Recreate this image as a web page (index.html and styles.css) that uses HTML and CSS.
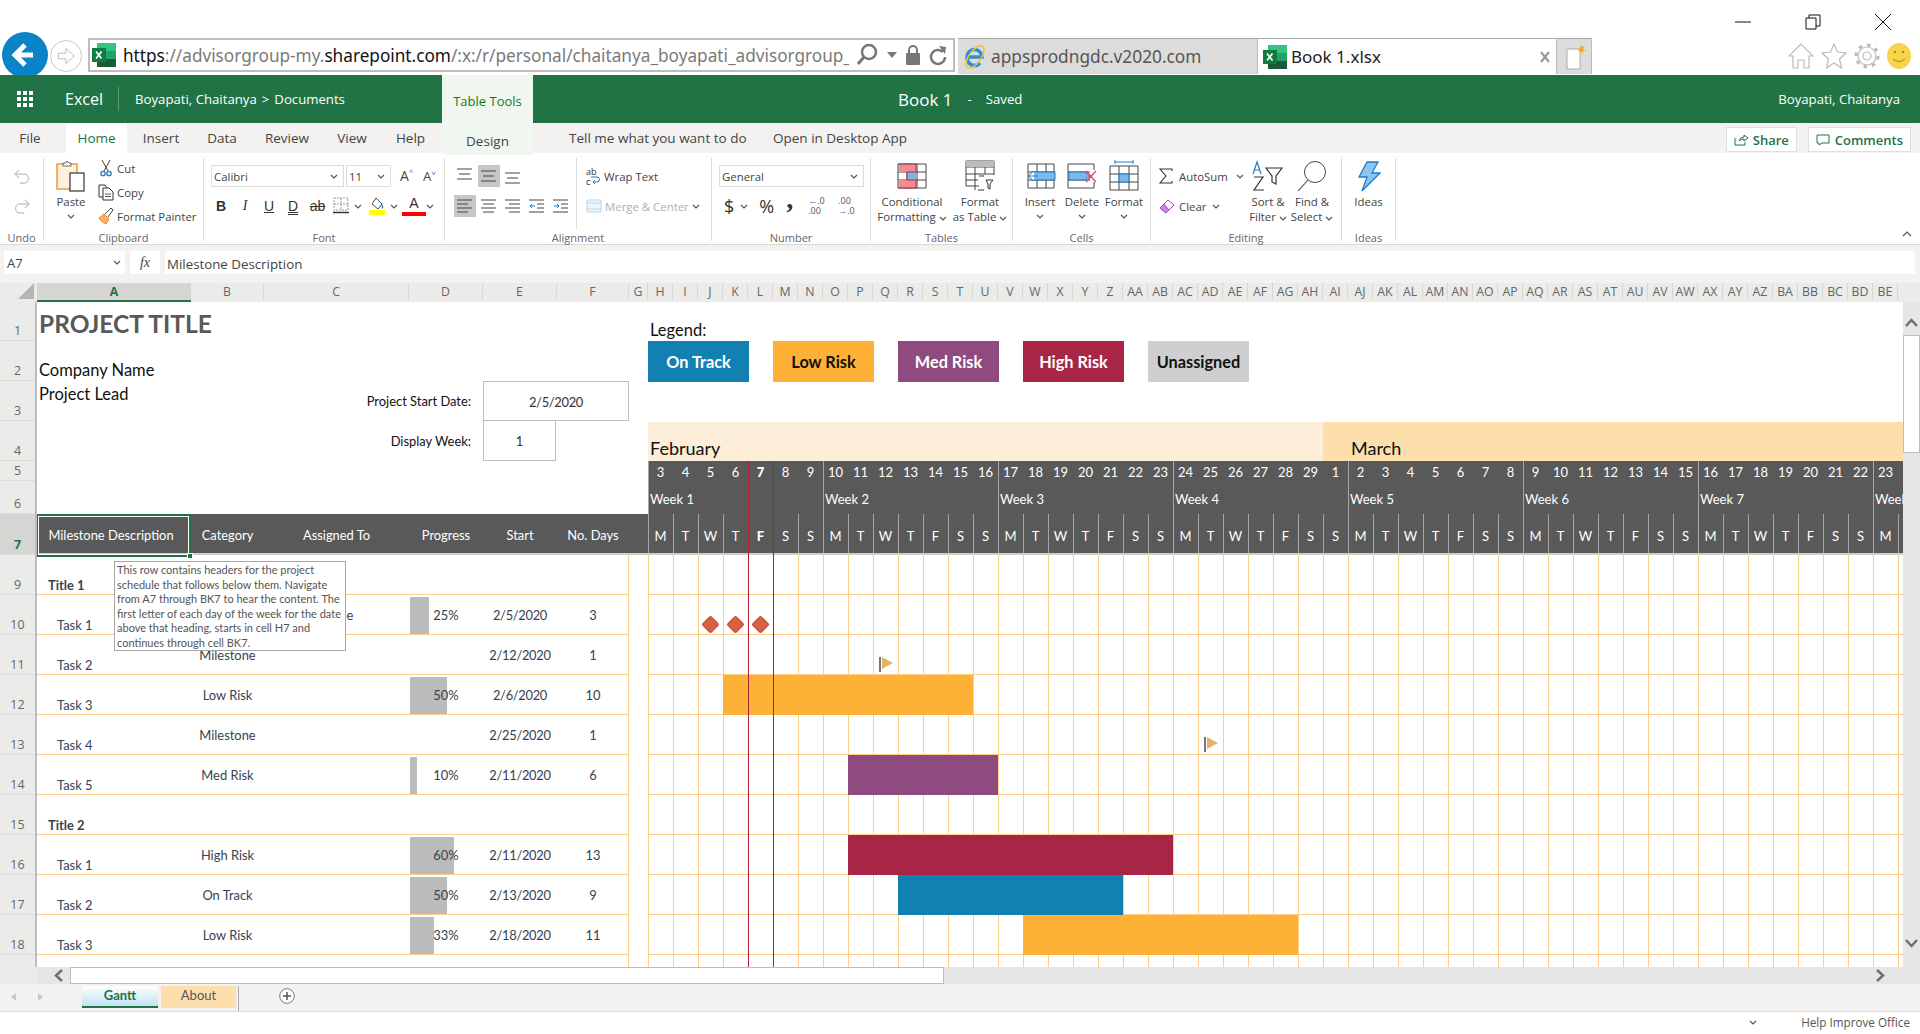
FILE: index.html
```html
<!DOCTYPE html>
<html lang="en">
<head>
    <meta charset="UTF-8">
    <title>Book 1.xlsx</title>
    <link rel="stylesheet" href="styles.css">
</head>
<body>
    <svg class="defs" width="0" height="0">
        <symbol id="xl" viewBox="0 0 24 24">
            <rect x="5" y="0" width="19" height="8" fill="#33c481"/>
            <rect x="5" y="8" width="19" height="8" fill="#21a366"/>
            <rect x="5" y="16" width="19" height="8" fill="#185c37"/>
            <rect x="0" y="5" width="14" height="14" fill="#107c41"/>
            <path d="M4 8.500l5.500 7M9.500 8.500l-5.500 7" stroke="#fff" stroke-width="1.700" fill="none"/>
        </symbol>
        <symbol id="chev" viewBox="0 0 8 5">
            <path d="M1 1l3 3 3-3" stroke="#555" stroke-width="1.200" fill="none"/>
        </symbol>
    </svg>

    <div class="window-bar">
        <svg class="win-icon" viewBox="0 0 16 16"><path d="M0 8h16" stroke="#111" stroke-width="1"/></svg>
        <svg class="win-icon" viewBox="0 0 16 16"><path d="M1 4h10v11H1zM4 4V1h11v11h-4" stroke="#111" fill="none"/></svg>
        <svg class="win-icon" viewBox="0 0 16 16"><path d="M0 0l16 16M16 0L0 16" stroke="#111"/></svg>
    </div>

    <div class="nav-bar">
        <div class="back-btn">
            <svg viewBox="0 0 46 46" width="46" height="46"><path d="M31 23H15M23 13L13 23l10 10" stroke="#fff" stroke-width="5" fill="none"/></svg>
        </div>
        <div class="forward-btn">
            <svg viewBox="0 0 32 32" width="30" height="30"><path d="M8 13h8V8l9 8-9 8v-5H8z" stroke="#bbb" fill="#fff"/></svg>
        </div>
        <div class="address">
            <svg class="fav" width="24" height="24"><use href="#xl"/></svg>
            <div class="url"><b>https</b>://advisorgroup-my.<b>sharepoint.com</b>/:x:/r/personal/chaitanya_boyapati_advisorgroup_com/Documents</div>
            <div class="addr-tools">
                <svg width="24" height="24" viewBox="0 0 24 24"><circle cx="14" cy="9" r="7" stroke="#777" stroke-width="2.500" fill="none"/><path d="M9 14l-6 7" stroke="#777" stroke-width="3"/></svg>
                <svg width="10" height="6" viewBox="0 0 10 6"><path d="M0 0h10L5 6z" fill="#777"/></svg>
                <svg width="16" height="22" viewBox="0 0 16 22"><path d="M4 10V6a4 4 0 018 0v4" stroke="#777" stroke-width="2" fill="none"/><rect x="1" y="9" width="14" height="12" rx="1" fill="#777"/></svg>
                <svg width="18" height="22" viewBox="0 0 18 22"><path d="M14 8a7 7 0 10 2 5" stroke="#777" stroke-width="2.500" fill="none"/><path d="M10 2l7 1-1 7z" fill="#777"/></svg>
            </div>
        </div>
        <div class="browser-tab">
            <svg width="24" height="26" viewBox="0 0 24 26"><path d="M5 13h14a7.500 8 0 10-2 6" stroke="#2a8fd8" stroke-width="3.500" fill="none"/><ellipse cx="12" cy="13" rx="13" ry="6" transform="rotate(-55 12 13)" stroke="#f2c230" stroke-width="1.500" fill="none"/></svg>
            <span>appsprodngdc.v2020.com</span>
        </div>
        <div class="browser-tab current">
            <svg width="24" height="24"><use href="#xl"/></svg>
            <span>Book 1.xlsx</span>
            <svg class="tab-close" width="10" height="12" viewBox="0 0 10 12"><path d="M1 1l8 10M9 1L1 11" stroke="#999" stroke-width="2.200"/></svg>
        </div>
        <div class="new-tab">
            <svg width="22" height="26" viewBox="0 0 22 26"><path d="M2 5h13v20H2z" fill="#fff" stroke="#aaa"/><path d="M16 0l1 3 3-1-2 3 3 2-3 0-1 3-1-3-3 0 2-3z" fill="#f5a623"/></svg>
        </div>
        <div class="browser-icons">
            <svg width="26" height="28" viewBox="0 0 26 28"><path d="M13 2L1 14h4v12h5v-8h6v8h5V14h4z" fill="#fff" stroke="#bbb" stroke-width="1.200"/></svg>
            <svg width="26" height="26" viewBox="0 0 26 26"><path d="M13 1l3.500 8 8.500 1-6.500 6 2 9-7.500-5-7.500 5 2-9L1 10l8.500-1z" fill="#fff" stroke="#bbb" stroke-width="1.200"/></svg>
            <svg width="26" height="26" viewBox="0 0 26 26"><circle cx="13" cy="13" r="4" fill="none" stroke="#bbb" stroke-width="1.200"/><circle cx="13" cy="13" r="9" fill="none" stroke="#bbb" stroke-width="1.200"/><circle cx="13" cy="13" r="11" fill="none" stroke="#bbb" stroke-width="3" stroke-dasharray="3.500 5.100"/></svg>
            <svg width="24" height="26" viewBox="0 0 24 26"><ellipse cx="12" cy="13" rx="12" ry="13" fill="#f7d44c"/><circle cx="8" cy="9" r="1.200" fill="#b08a10"/><circle cx="16" cy="9" r="1.200" fill="#b08a10"/><path d="M6 16q6 5 12 0" stroke="#b08a10" fill="none"/></svg>
        </div>
    </div>
    <div class="nav-gap"></div>

    <div class="suite-bar">
        <svg class="waffle" width="16" height="16" viewBox="0 0 16 16"><path d="M0 0h4v4H0zM6 0h4v4H6zM12 0h4v4h-4zM0 6h4v4H0zM6 6h4v4H6zM12 6h4v4h-4zM0 12h4v4H0zM6 12h4v4H6zM12 12h4v4h-4z" fill="#fff"/></svg>
        <span class="app-name">Excel</span>
        <span class="crumbs">Boyapati, Chaitanya<i>&gt;</i>Documents</span>
        <span class="table-tools">Table Tools</span>
        <span class="doc-name">Book 1</span>
        <span class="doc-state">-<em>Saved</em></span>
        <span class="user-name">Boyapati, Chaitanya</span>
    </div>

    <div class="tabs">
        <span class="tab tab-file">File</span>
        <span class="tab active">Home</span>
        <span class="tab">Insert</span>
        <span class="tab">Data</span>
        <span class="tab">Review</span>
        <span class="tab">View</span>
        <span class="tab">Help</span>
        <span class="tab tab-design">Design</span>
        <span class="tab-spacer"></span>
        <span class="tab-extra">Tell me what you want to do</span>
        <span class="tab-extra">Open in Desktop App</span>
        <span class="tab-actions">
            <span class="pill"><svg width="14" height="12" viewBox="0 0 14 12"><path d="M1 4v7h10V8M5 7q1-4 5-4V1l4 3-4 3V5q-3 0-5 2z" stroke="#217346" fill="none"/></svg>Share</span>
            <span class="pill"><svg width="14" height="12" viewBox="0 0 14 12"><path d="M1 1h12v8H6l-3 2V9H1z" stroke="#217346" fill="none"/></svg>Comments</span>
        </span>
    </div>

    <div class="ribbon">
        <div class="group">
            <div class="group-body undo-body">
                <svg width="18" height="18" viewBox="0 0 18 18"><path d="M6 3L2 7l4 4M2 7h9a4 4 0 010 9H7" stroke="#c8c8c8" stroke-width="1.300" fill="none"/></svg>
                <svg width="18" height="18" viewBox="0 0 18 18"><path d="M12 3l4 4-4 4M16 7H7a4 4 0 000 9h4" stroke="#c8c8c8" stroke-width="1.300" fill="none"/></svg>
            </div>
            <div class="group-label">Undo</div>
        </div>

        <div class="group">
            <div class="group-body clipboard-body">
                <div class="big">
                    <svg width="30" height="32" viewBox="0 0 30 32"><rect x="1" y="4" width="20" height="25" fill="#fdf1dd" stroke="#ed9b3a" stroke-width="1.500"/><path d="M7 6V3h3l1-2 2 2h2v3z" fill="#fff" stroke="#666"/><rect x="14" y="13" width="14" height="18" fill="#fff" stroke="#333" stroke-width="1.200"/></svg>
                    <span>Paste</span>
                    <svg class="chev" width="8" height="5"><use href="#chev"/></svg>
                </div>
                <div class="small-col">
                    <div class="small">
                        <svg width="16" height="18" viewBox="0 0 16 18"><path d="M4 1l6 11M12 1L6 12" stroke="#444" fill="none"/><circle cx="5" cy="14.500" r="2.200" stroke="#1e7cc8" stroke-width="1.300" fill="none"/><circle cx="11" cy="14.500" r="2.200" stroke="#1e7cc8" stroke-width="1.300" fill="none"/></svg>
                        <span>Cut</span>
                    </div>
                    <div class="small">
                        <svg width="16" height="18" viewBox="0 0 16 18"><path d="M5 2H1v12h4M5 2h2l2 3" stroke="#333" fill="none"/><path d="M5 5h6l4 4v8H5z" fill="#fff" stroke="#333"/><path d="M7 11h6M7 13.500h6" stroke="#555"/></svg>
                        <span>Copy</span>
                    </div>
                    <div class="small">
                        <svg width="16" height="18" viewBox="0 0 16 18"><path d="M1 11l5-4 5 5-3 5q-4-1-7-6z" fill="#f7b267" stroke="#ed8f2f"/><path d="M7 7l6-6 2 2-5 7" fill="#fff" stroke="#444"/></svg>
                        <span>Format Painter</span>
                    </div>
                </div>
            </div>
            <div class="group-label">Clipboard</div>
        </div>

        <div class="group">
            <div class="group-body font-body">
                <div class="row-top">
                    <div class="select font-name">Calibri<svg class="chev" width="8" height="5"><use href="#chev"/></svg></div>
                    <div class="select font-size">11<svg class="chev" width="8" height="5"><use href="#chev"/></svg></div>
                    <span class="grow">A<sup>^</sup></span>
                    <span class="shrink">A<sup>˅</sup></span>
                </div>
                <div class="row-low font-tools">
                    <span class="fmt fmt-b">B</span>
                    <span class="fmt fmt-i">I</span>
                    <span class="fmt fmt-u">U</span>
                    <span class="fmt fmt-d">D</span>
                    <span class="fmt fmt-s">ab</span>
                    <span class="fmt fmt-border"><svg width="16" height="18" viewBox="0 0 16 18"><path d="M1 1h14v12H1zM8 1v12M1 7h14" stroke="#999" stroke-dasharray="2 1" fill="none"/><path d="M0 15.500h16" stroke="#333" stroke-width="1.500"/></svg></span>
                    <span class="fmt-chev"><svg class="chev" width="8" height="5"><use href="#chev"/></svg></span>
                    <span class="fmt fmt-fill"><svg width="16" height="18" viewBox="0 0 16 18"><path d="M7 1l6 6-4 5-6-5z" fill="#fff" stroke="#444"/><path d="M13 7q2 3 1 5-2-1-1-5z" fill="#1e7cc8"/><rect y="13" width="16" height="5" fill="#ffff00"/></svg></span>
                    <span class="fmt-chev"><svg class="chev" width="8" height="5"><use href="#chev"/></svg></span>
                    <span class="fmt fmt-color">A</span>
                    <span class="fmt-chev"><svg class="chev" width="8" height="5"><use href="#chev"/></svg></span>
                </div>
            </div>
            <div class="group-label">Font</div>
        </div>

        <div class="group">
            <div class="group-body align-body">
                <div class="align-left">
                    <div class="row-top">
                        <span class="al"><svg width="15" height="16" viewBox="0 0 15 16"><path d="M0 1h15M2 6h11M0 11h15" stroke="#444"/></svg></span>
                        <span class="al on"><svg width="15" height="16" viewBox="0 0 15 16"><path d="M0 3h15M2 8h11M0 13h15" stroke="#444"/></svg></span>
                        <span class="al"><svg width="15" height="16" viewBox="0 0 15 16"><path d="M0 5h15M2 10h11M0 15h15" stroke="#444"/></svg></span>
                    </div>
                    <div class="row-low">
                        <span class="al on"><svg width="15" height="14" viewBox="0 0 15 14"><path d="M0 1h15M0 5h11M0 9h15M0 13h11" stroke="#444"/></svg></span>
                        <span class="al"><svg width="15" height="14" viewBox="0 0 15 14"><path d="M0 1h15M2 5h11M0 9h15M2 13h11" stroke="#444"/></svg></span>
                        <span class="al"><svg width="15" height="14" viewBox="0 0 15 14"><path d="M0 1h15M4 5h11M0 9h15M4 13h11" stroke="#444"/></svg></span>
                        <span class="al"><svg width="15" height="14" viewBox="0 0 15 14"><path d="M0 1h15M8 5h7M8 9h7M0 13h15" stroke="#444"/><path d="M6 7H1m2-2L1 7l2 2" stroke="#1e7cc8" fill="none"/></svg></span>
                        <span class="al"><svg width="15" height="14" viewBox="0 0 15 14"><path d="M0 1h15M8 5h7M8 9h7M0 13h15" stroke="#444"/><path d="M1 7h5M4 5l2 2-2 2" stroke="#1e7cc8" fill="none"/></svg></span>
                    </div>
                </div>
                <div class="align-right">
                    <div class="small wrap-row">
                        <span class="wrap-icon">ab<br>c<svg width="10" height="9" viewBox="0 0 10 9"><path d="M1 1h6a2.500 2.500 0 010 5H3m2-2L3 6l2 2" stroke="#1e7cc8" fill="none"/></svg></span>
                        <span>Wrap Text</span>
                    </div>
                    <div class="small merge-row">
                        <svg width="16" height="14" viewBox="0 0 16 14"><path d="M1 1h14v12H1zM1 4h14M1 10h14" stroke="#bcd5e8" fill="#eef5fa"/></svg>
                        <span>Merge &amp; Center</span>
                        <svg class="chev" width="8" height="5"><use href="#chev"/></svg>
                    </div>
                </div>
            </div>
            <div class="group-label">Alignment</div>
        </div>

        <div class="group">
            <div class="group-body number-body">
                <div class="row-top">
                    <div class="select num-format">General<svg class="chev" width="8" height="5"><use href="#chev"/></svg></div>
                </div>
                <div class="row-low num-tools">
                    <span class="num-sym">$</span>
                    <svg class="chev" width="8" height="5"><use href="#chev"/></svg>
                    <span class="num-sym num-pct">%</span>
                    <span class="num-sym num-comma">,</span>
                    <span class="num-dec"><i>←</i>.0<br>.00</span>
                    <span class="num-dec">.00<br><i>→</i>.0</span>
                </div>
            </div>
            <div class="group-label">Number</div>
        </div>

        <div class="group">
            <div class="group-body tables-body">
                <div class="big">
                    <svg width="30" height="32" viewBox="0 0 30 32"><path d="M1 4h28v24H1zM1 12h28M1 20h28M10 4v24M20 4v24" stroke="#444" fill="#fff"/><rect x="2" y="5" width="17" height="7" fill="#f28b92"/><rect x="10" y="12" width="9" height="8" fill="#7db6e8"/><rect x="2" y="20" width="17" height="7" fill="#f28b92"/><path d="M1 4h18v8h-9v8h9v8H1" stroke="#b3303c" fill="none"/></svg>
                    <span>Conditional</span>
                    <span>Formatting <svg class="chev" width="8" height="5"><use href="#chev"/></svg></span>
                </div>
                <div class="big">
                    <svg width="30" height="32" viewBox="0 0 30 32"><path d="M1 1h28v25H1zM1 7h28M1 14h28M1 20h12M10 1v29M20 1v13" stroke="#444" fill="#fff"/><rect x="1" y="1" width="28" height="6" fill="#bbb"/><rect x="14" y="15" width="16" height="16" fill="#fff"/><path d="M21 20h7l-3 4v5l-2-1v-4z" fill="#fff" stroke="#333"/><path d="M13 30h6M19 16h-5" stroke="#333"/></svg>
                    <span>Format</span>
                    <span>as Table <svg class="chev" width="8" height="5"><use href="#chev"/></svg></span>
                </div>
            </div>
            <div class="group-label">Tables</div>
        </div>

        <div class="group">
            <div class="group-body cells-body">
                <div class="big">
                    <svg width="32" height="32" viewBox="0 0 32 32"><path d="M4 4h26v24H4zM4 12h26M4 20h26M13 4v24M22 4v24" stroke="#444" fill="#fff"/><rect x="8" y="12" width="23" height="8" fill="#7db6e8" stroke="#1e7cc8"/><path d="M10 11l-6 5 6 5M4 16h10" stroke="#1e7cc8" fill="#fff"/></svg>
                    <span>Insert</span>
                    <svg class="chev" width="8" height="5"><use href="#chev"/></svg>
                </div>
                <div class="big">
                    <svg width="32" height="32" viewBox="0 0 32 32"><path d="M2 4h26M2 12h22M2 20h22M2 28h26M2 4v24M11 12v8M28 4v6M28 22v6" stroke="#444" fill="none"/><path d="M3 12h16l5 4-5 4H3z" fill="#7db6e8" stroke="#1e7cc8"/><path d="M20 11l10 11M30 11L20 22" stroke="#e8434c" stroke-width="1.300"/></svg>
                    <span>Delete</span>
                    <svg class="chev" width="8" height="5"><use href="#chev"/></svg>
                </div>
                <div class="big">
                    <svg width="32" height="32" viewBox="0 0 32 32"><path d="M2 6h28v24H2zM2 14h28M2 22h28M11 6v24M21 6v24" stroke="#444" fill="#fff"/><rect x="11" y="14" width="10" height="8" fill="#7db6e8" stroke="#1e7cc8"/><path d="M7 2h18M7 0v4M25 0v4" stroke="#1e7cc8"/></svg>
                    <span>Format</span>
                    <svg class="chev" width="8" height="5"><use href="#chev"/></svg>
                </div>
            </div>
            <div class="group-label">Cells</div>
        </div>

        <div class="group">
            <div class="group-body editing-body">
                <div class="edit-col">
                    <div class="small autosum-row">
                        <svg width="14" height="16" viewBox="0 0 14 16"><path d="M13 3V1H1l6 7-6 7h12v-2" stroke="#333" stroke-width="1.100" fill="none"/></svg>
                        <span>AutoSum</span>
                        <svg class="chev" width="8" height="5"><use href="#chev"/></svg>
                    </div>
                    <div class="small clear-row">
                        <svg width="16" height="16" viewBox="0 0 16 16"><path d="M1 10l8-8 6 5-8 8z" fill="#fff" stroke="#a24bb8"/><path d="M1 10l4-4 5 6-3 3z" fill="#c98ad9" stroke="#a24bb8"/></svg>
                        <span>Clear</span>
                        <svg class="chev" width="8" height="5"><use href="#chev"/></svg>
                    </div>
                </div>
                <div class="big">
                    <svg width="32" height="32" viewBox="0 0 32 32"><path d="M1 14l4-12 4 12M2.500 10h5" stroke="#1e7cc8" stroke-width="1.200" fill="none"/><path d="M2 17h9L2 30h10" stroke="#333" stroke-width="1.200" fill="none"/><path d="M14 8h16l-6 8v8l-4-2v-6z" stroke="#333" stroke-width="1.200" fill="#fff"/></svg>
                    <span>Sort &amp;</span>
                    <span>Filter <svg class="chev" width="8" height="5"><use href="#chev"/></svg></span>
                </div>
                <div class="big">
                    <svg width="32" height="32" viewBox="0 0 32 32"><circle cx="19" cy="12" r="10.500" stroke="#444" fill="#fff"/><path d="M12 20L2 31" stroke="#777" stroke-width="1.200"/></svg>
                    <span>Find &amp;</span>
                    <span>Select <svg class="chev" width="8" height="5"><use href="#chev"/></svg></span>
                </div>
            </div>
            <div class="group-label">Editing</div>
        </div>

        <div class="group">
            <div class="group-body ideas-body">
                <div class="big">
                    <svg width="24" height="32" viewBox="0 0 24 32"><path d="M10 2h11l-6 11h8L5 31l5-14H2z" fill="#8cc4f2" stroke="#1e7cc8" stroke-width="1.300"/></svg>
                    <span>Ideas</span>
                </div>
            </div>
            <div class="group-label">Ideas</div>
        </div>
        <svg class="collapse" width="10" height="6" viewBox="0 0 10 6"><path d="M1 5l4-4 4 4" stroke="#555" stroke-width="1.200" fill="none"/></svg>
    </div>

    <div class="formula-bar">
        <div class="name-box">A7<svg class="chev" width="8" height="5"><use href="#chev"/></svg></div>
        <div class="fx-box">fx</div>
        <div class="formula-input">Milestone Description</div>
    </div>

    <div class="col-heads">
        <div class="corner"></div>
        <span class="col-active">A</span><span>B</span><span>C</span><span>D</span><span>E</span><span>F</span><span>G</span>
        <span>H</span><span>I</span><span>J</span><span>K</span><span>L</span><span>M</span><span>N</span><span>O</span><span>P</span><span>Q</span><span>R</span><span>S</span><span>T</span><span>U</span><span>V</span><span>W</span><span>X</span><span>Y</span><span>Z</span>
        <span>AA</span><span>AB</span><span>AC</span><span>AD</span><span>AE</span><span>AF</span><span>AG</span><span>AH</span><span>AI</span><span>AJ</span><span>AK</span><span>AL</span><span>AM</span><span>AN</span><span>AO</span><span>AP</span><span>AQ</span><span>AR</span><span>AS</span><span>AT</span><span>AU</span><span>AV</span><span>AW</span><span>AX</span><span>AY</span><span>AZ</span>
        <span>BA</span><span>BB</span><span>BC</span><span>BD</span><span>BE</span>
    </div>

    <div class="sheet">
        <div class="row-heads">
            <span class="rh-40">1</span>
            <span class="rh-40">2</span>
            <span class="rh-40">3</span>
            <span class="rh-40">4</span>
            <span class="rh-20">5</span>
            <span class="rh-33">6</span>
            <span class="rh-41 row-active">7</span>
            <span class="rh-40">9</span>
            <span class="rh-40">10</span>
            <span class="rh-40">11</span>
            <span class="rh-40">12</span>
            <span class="rh-40">13</span>
            <span class="rh-40">14</span>
            <span class="rh-40">15</span>
            <span class="rh-40">16</span>
            <span class="rh-40">17</span>
            <span class="rh-40">18</span>
        </div>

        <div class="grid">
            <div class="schedule">
                <div class="project">
                    <div class="project-title">PROJECT TITLE</div>
                    <div class="company">Company Name</div>
                    <div class="lead">Project Lead</div>
                    <div class="field-label label-date">Project Start Date:</div>
                    <div class="field-box box-date date">2/5/2020</div>
                    <div class="field-label label-week">Display Week:</div>
                    <div class="field-box box-week">1</div>
                </div>

                <div class="head-row">
                    <span class="head-selected">Milestone Description</span>
                    <span>Category</span>
                    <span>Assigned To</span>
                    <span>Progress</span>
                    <span>Start</span>
                    <span>No. Days</span>
                    <span></span>
                </div>

                <div class="task-row"><span class="title-cell">Title 1</span></div>
                <div class="task-row">
                    <span class="task-cell">Task 1</span><span></span><span>Name</span>
                    <span class="pct"><i class="pct-bar" style="width:25%"></i><em>25%</em></span><span class="date">2/5/2020</span><span>3</span>
                </div>
                <div class="task-row">
                    <span class="task-cell">Task 2</span><span>Milestone</span><span></span>
                    <span class="pct"></span><span class="date">2/12/2020</span><span>1</span>
                </div>
                <div class="task-row">
                    <span class="task-cell">Task 3</span><span>Low Risk</span><span></span>
                    <span class="pct"><i class="pct-bar" style="width:50%"></i><em>50%</em></span><span class="date">2/6/2020</span><span>10</span>
                </div>
                <div class="task-row">
                    <span class="task-cell">Task 4</span><span>Milestone</span><span></span>
                    <span class="pct"></span><span class="date">2/25/2020</span><span>1</span>
                </div>
                <div class="task-row">
                    <span class="task-cell">Task 5</span><span>Med Risk</span><span></span>
                    <span class="pct"><i class="pct-bar" style="width:10%"></i><em>10%</em></span><span class="date">2/11/2020</span><span>6</span>
                </div>
                <div class="task-row"><span class="title-cell">Title 2</span></div>
                <div class="task-row">
                    <span class="task-cell">Task 1</span><span>High Risk</span><span></span>
                    <span class="pct"><i class="pct-bar" style="width:60%"></i><em>60%</em></span><span class="date">2/11/2020</span><span>13</span>
                </div>
                <div class="task-row">
                    <span class="task-cell">Task 2</span><span>On Track</span><span></span>
                    <span class="pct"><i class="pct-bar" style="width:50%"></i><em>50%</em></span><span class="date">2/13/2020</span><span>9</span>
                </div>
                <div class="task-row">
                    <span class="task-cell">Task 3</span><span>Low Risk</span><span></span>
                    <span class="pct"><i class="pct-bar" style="width:33%"></i><em>33%</em></span><span class="date">2/18/2020</span><span>11</span>
                </div>
                <div class="task-row"></div>
            </div>

            <div class="timeline">
                <div class="legend">
                    <div class="legend-label">Legend:</div>
                    <div class="legend-items">
                        <span class="on-track">On Track</span>
                        <span class="low-risk">Low Risk</span>
                        <span class="med-risk">Med Risk</span>
                        <span class="high-risk">High Risk</span>
                        <span class="unassigned">Unassigned</span>
                    </div>
                </div>

                <div class="months">
                    <span class="feb">February</span>
                    <span class="mar">March</span>
                </div>

                <div class="tl-head">
                    <div class="days">
                        <span>3</span><span>4</span><span>5</span><span>6</span><span class="today">7</span><span>8</span><span>9</span><span>10</span><span>11</span><span>12</span><span>13</span><span>14</span><span>15</span><span>16</span><span>17</span><span>18</span><span>19</span><span>20</span><span>21</span><span>22</span><span>23</span><span>24</span><span>25</span><span>26</span><span>27</span><span>28</span><span>29</span>
                        <span>1</span><span>2</span><span>3</span><span>4</span><span>5</span><span>6</span><span>7</span><span>8</span><span>9</span><span>10</span><span>11</span><span>12</span><span>13</span><span>14</span><span>15</span><span>16</span><span>17</span><span>18</span><span>19</span><span>20</span><span>21</span><span>22</span><span>23</span>
                    </div>
                    <div class="weeks">
                        <span>Week 1</span><span>Week 2</span><span>Week 3</span><span>Week 4</span><span>Week 5</span><span>Week 6</span><span>Week 7</span><span>Week 8</span>
                    </div>
                    <div class="dows">
                        <span>M</span><span>T</span><span>W</span><span>T</span><span class="today">F</span><span>S</span><span>S</span>
                        <span>M</span><span>T</span><span>W</span><span>T</span><span>F</span><span>S</span><span>S</span>
                        <span>M</span><span>T</span><span>W</span><span>T</span><span>F</span><span>S</span><span>S</span>
                        <span>M</span><span>T</span><span>W</span><span>T</span><span>F</span><span>S</span><span>S</span>
                        <span>M</span><span>T</span><span>W</span><span>T</span><span>F</span><span>S</span><span>S</span>
                        <span>M</span><span>T</span><span>W</span><span>T</span><span>F</span><span>S</span><span>S</span>
                        <span>M</span><span>T</span><span>W</span><span>T</span><span>F</span><span>S</span><span>S</span>
                        <span>M</span>
                    </div>
                </div>

                <div class="gantt">
                    <div class="gantt-row"></div>
                    <div class="gantt-row">
                        <i class="diamond" style="grid-column:3"></i><i class="diamond" style="grid-column:4"></i><i class="diamond" style="grid-column:5"></i>
                    </div>
                    <div class="gantt-row"><i class="flag" style="grid-column:10"></i></div>
                    <div class="gantt-row"><i class="bar low-risk" style="grid-column:4 / span 10"></i></div>
                    <div class="gantt-row"><i class="flag" style="grid-column:23"></i></div>
                    <div class="gantt-row"><i class="bar med-risk" style="grid-column:9 / span 6"></i></div>
                    <div class="gantt-row"></div>
                    <div class="gantt-row"><i class="bar high-risk" style="grid-column:9 / span 13"></i></div>
                    <div class="gantt-row"><i class="bar on-track" style="grid-column:11 / span 9"></i></div>
                    <div class="gantt-row"><i class="bar low-risk" style="grid-column:16 / span 11"></i></div>
                    <div class="gantt-row"></div>
                </div>

                <i class="today-line today-line-a"></i>
                <i class="today-line today-line-b"></i>
            </div>

            <div class="cell-cursor"><i></i></div>
            <div class="cell-tip">This row contains headers for the project<br>schedule that follows below them. Navigate<br>from A7 through BK7 to hear the content. The<br>first letter of each day of the week for the date<br>above that heading, starts in cell H7 and<br>continues through cell BK7.</div>
        </div>

        <div class="vscroll">
            <svg class="arrow-up" width="13" height="9" viewBox="0 0 13 9"><path d="M1 8l5.500-6 5.500 6" stroke="#707070" stroke-width="2.500" fill="none"/></svg>
            <div class="vthumb"></div>
            <svg class="arrow-down" width="13" height="9" viewBox="0 0 13 9"><path d="M1 1l5.500 6 5.500-6" stroke="#707070" stroke-width="2.500" fill="none"/></svg>
        </div>
    </div>

    <div class="hscroll">
        <div class="hs-corner"></div>
        <div class="hs-left"><svg width="9" height="13" viewBox="0 0 9 13"><path d="M8 1L2 6.500 8 12" stroke="#707070" stroke-width="2.500" fill="none"/></svg></div>
        <div class="hthumb"></div>
        <div class="hs-right"><svg width="9" height="13" viewBox="0 0 9 13"><path d="M1 1l6 5.500L1 12" stroke="#707070" stroke-width="2.500" fill="none"/></svg></div>
    </div>

    <div class="sheet-tabs">
        <div class="tab-nav">
            <svg width="5" height="8" viewBox="0 0 5 8"><path d="M5 0v8L0 4z" fill="#c8c8c8"/></svg>
            <svg width="5" height="8" viewBox="0 0 5 8"><path d="M0 0v8l5-4z" fill="#c8c8c8"/></svg>
        </div>
        <span class="sheet-tab tab-gantt">Gantt</span>
        <span class="sheet-tab tab-about">About</span>
        <span class="tab-sep"></span>
        <svg class="add-sheet" width="16" height="16" viewBox="0 0 16 16"><circle cx="8" cy="8" r="7.300" stroke="#777" fill="#fff"/><path d="M8 4v8M4 8h8" stroke="#555" stroke-width="1.500"/></svg>
    </div>

    <div class="status-bar">
        <svg class="chev" width="8" height="5"><use href="#chev"/></svg>
        <span>Help Improve Office</span>
    </div>
</body>
</html>
```

FILE: styles.css
```css
* {
    margin: 0;
    padding: 0;
    box-sizing: border-box;
}

body {
    font-family: "Open Sans", Arial, sans-serif;
    width: 1920px;
    height: 1034px;
    overflow: hidden;
    background: #fff;
    color: #444;
}

i, em {
    font-style: normal;
}

.defs {
    position: absolute;
}

.chev {
    flex: none;
}

/* browser frame */
.window-bar {
    height: 38px;
    display: flex;
    justify-content: flex-end;
    align-items: flex-start;
    gap: 54px;
    padding: 14px 29px 0 0;
}

.win-icon {
    width: 16px;
    height: 16px;
}

.nav-bar {
    height: 36px;
    display: flex;
}

.nav-gap {
    height: 1px;
}

.back-btn {
    width: 46px;
    height: 46px;
    margin: -6px 0 0 2px;
    border-radius: 50%;
    background: #0a84c6;
}

.forward-btn {
    width: 32px;
    height: 32px;
    margin: 2px 6px 0 2px;
    border: 1px solid #c8c8c8;
    border-radius: 50%;
}

.address {
    width: 867px;
    height: 34px;
    display: flex;
    align-items: center;
    border: 2px solid #bdbdbd;
    margin-right: 3px;
}

.fav {
    margin-left: 2px;
    flex: none;
}

.url {
    flex: 1;
    margin-left: 7px;
    font-family: "Noto Sans", sans-serif;
    font-size: 17.200px;
    color: #7a7a7a;
    white-space: nowrap;
    overflow: hidden;
}

.url b {
    font-weight: 400;
    color: #111;
}

.addr-tools {
    width: 104px;
    flex: none;
    display: flex;
    align-items: center;
    gap: 8px;
    padding-left: 6px;
}

.browser-tab {
    width: 299px;
    height: 36px;
    display: flex;
    align-items: center;
    gap: 4px;
    padding-left: 5px;
    background: #dcdcdc;
    border-top: 1px solid #aaa;
    font-family: "Noto Sans", sans-serif;
    font-size: 17.300px;
    color: #555;
}

.browser-tab.current {
    width: 300px;
    background: #fff;
    color: #222;
    font-size: 17px;
    border-left: 1px solid #bbb;
    border-right: 1px solid #bbb;
}

.tab-close {
    margin-left: auto;
    margin-right: 6px;
}

.new-tab {
    width: 35px;
    height: 36px;
    padding: 5px 0 0 8px;
    background: #dcdcdc;
    border-top: 1px solid #aaa;
    border-right: 1px solid #bbb;
}

.browser-icons {
    margin-left: auto;
    padding-right: 9px;
    display: flex;
    align-items: center;
    gap: 7px;
}

/* excel suite header */
.suite-bar {
    position: relative;
    height: 48px;
    display: flex;
    align-items: center;
    background: #217346;
    color: #fff;
}

.waffle {
    margin-left: 17px;
}

.app-name {
    width: 54px;
    margin-left: 32px;
    height: 24px;
    line-height: 24px;
    font-size: 16px;
    border-right: 1px solid #5d9a78;
}

.crumbs {
    width: 323px;
    padding-left: 16px;
    font-size: 13.200px;
}

.crumbs i {
    margin: 0 5px;
}

.table-tools {
    width: 91px;
    height: 48px;
    line-height: 52px;
    text-align: center;
    background: #f0f7f1;
    color: #107c10;
    font-size: 13px;
    white-space: nowrap;
}

.doc-name {
    margin-left: 365px;
    font-size: 17px;
}

.doc-state {
    margin-left: 15px;
    font-size: 13.200px;
}

.doc-state em {
    margin-left: 14px;
}

.user-name {
    margin-left: auto;
    padding-right: 20px;
    font-size: 13.200px;
}

/* ribbon tabs */
.tabs {
    height: 30px;
    display: grid;
    grid-template-columns: 66px 61px 68px 54px 76px 54px 63px 91px 36px 204px 170px 1fr;
    background: #f3f2f1;
    font-size: 13.500px;
    color: #444;
}

.tab {
    text-align: center;
    line-height: 30px;
}

.tab-file {
    padding-right: 6px;
}

.tab.active {
    background: #fff;
    color: #217346;
}

.tab-design {
    background: #f0f7f1;
    height: 32px;
    line-height: 36px;
    position: relative;
}

.tab-extra {
    line-height: 30px;
    white-space: nowrap;
}

.tab-actions {
    display: flex;
    justify-content: flex-end;
    gap: 11px;
    padding: 4px 9px 3px 0;
}

.pill {
    display: flex;
    align-items: center;
    gap: 5px;
    padding: 0 7px;
    background: #fff;
    border: 1px solid #e1dfdd;
    color: #217346;
    font-size: 13px;
    font-weight: 600;
}

/* ribbon */
.ribbon {
    height: 92px;
    display: grid;
    grid-template-columns: 44px 160px 241px 267px 159px 142px 138px 191px 54px 1fr;
    border-bottom: 1px solid #d8d8d8;
    background: #fff;
    font-size: 11.400px;
    color: #444;
}

.group {
    height: 83px;
    margin-top: 5px;
    border-right: 1px solid #dcdcdc;
    display: flex;
    flex-direction: column;
}

.group-body {
    height: 74px;
    flex: none;
}

.group-label {
    flex: none;
    text-align: center;
    font-size: 11px;
    line-height: 12px;
    color: #666;
    white-space: nowrap;
}

.collapse {
    justify-self: end;
    align-self: end;
    margin: 0 8px 7px 0;
}

.big {
    display: flex;
    flex-direction: column;
    align-items: center;
    white-space: nowrap;
    line-height: 15px;
}

.big > svg:first-child {
    margin: 2px 0;
    height: 32px;
    flex: none;
}

.big > .chev {
    margin-top: 5px;
}

.small {
    display: flex;
    align-items: center;
    gap: 3px;
    height: 24px;
    white-space: nowrap;
}

.undo-body {
    display: flex;
    flex-direction: column;
    align-items: center;
    gap: 12px;
    padding-top: 9px;
}

.clipboard-body {
    display: grid;
    grid-template-columns: 54px 1fr;
}

.small-col {
    margin-top: -2px;
}

.row-top {
    display: flex;
    align-items: center;
    height: 22px;
    margin-top: 7px;
}

.row-low {
    display: flex;
    align-items: center;
    height: 22px;
    margin-top: 8px;
}

.select {
    height: 22px;
    display: flex;
    align-items: center;
    justify-content: space-between;
    padding: 0 5px 0 2px;
    border: 1px solid #dcdcdc;
    white-space: nowrap;
}

.font-body {
    padding-left: 7px;
}

.font-name {
    width: 133px;
    margin-right: 2px;
}

.font-size {
    width: 45px;
}

.grow, .shrink {
    font-size: 14px;
    margin-left: 9px;
    width: 14px;
    line-height: 20px;
}

.shrink {
    margin-left: 9px;
    font-size: 13px;
}

.grow sup, .shrink sup {
    font-size: 8px;
    color: #1e7cc8;
    line-height: 0;
}

.font-tools {
    margin-left: -2px;
}

.fmt {
    width: 24px;
    text-align: center;
    font-family: "Liberation Sans", sans-serif;
    font-size: 14px;
    color: #333;
    display: flex;
    justify-content: center;
    align-items: center;
}

.fmt-b {
    font-weight: 700;
}

.fmt-i {
    font-style: italic;
    font-family: "Liberation Serif", serif;
}

.fmt-u {
    text-decoration: underline;
}

.fmt-d {
    text-decoration: underline double;
}

.fmt-s {
    text-decoration: line-through;
    width: 25px;
}

.fmt-border {
    width: 22px;
}

.fmt-chev {
    width: 8px;
    display: flex;
    align-items: center;
}

.fmt-border + .fmt-chev {
    width: 12px;
    padding-left: 2px;
}

.fmt-fill {
    width: 26px;
}

.fmt-color {
    margin-left: 4px;
    height: 20px;
    font-size: 14px;
    line-height: 14px;
    align-items: flex-start;
    box-shadow: inset 0 -4px 0 #ff0000, inset 4px 0 0 #fff, inset -4px 0 0 #fff;
}

.align-body {
    padding-left: 7px;
    display: flex;
}

.align-left {
    width: 125px;
    height: 71px;
    border-right: 1px solid #dcdcdc;
}

.al {
    width: 24px;
    height: 22px;
    display: flex;
    align-items: center;
    justify-content: center;
    flex: none;
}

.al:last-child {
    width: 25px;
}

.al.on {
    background: #c8c6c4;
    box-shadow: 2px 0 0 #fff inset;
}

.align-right {
    padding-left: 9px;
    padding-top: 6px;
}

.wrap-row {
    height: 24px;
    gap: 2px;
}

.wrap-icon {
    width: 16px;
    font-size: 9px;
    line-height: 9px;
    color: #333;
}

.merge-row {
    height: 24px;
    margin-top: 6px;
    gap: 3px;
    color: #b0b0b0;
}

.number-body {
    padding-left: 7px;
}

.num-format {
    width: 145px;
}

.num-tools {
    padding-left: 5px;
    gap: 6px;
}

.num-sym {
    font-size: 18px;
    color: #333;
}

.num-pct {
    margin-left: 5px;
}

.num-comma {
    margin: -14px 9px 0 6px;
    font-family: "Liberation Serif", serif;
    font-size: 28px;
    line-height: 22px;
    font-weight: 700;
}

.num-dec {
    font-size: 9px;
    line-height: 10px;
    width: 20px;
    color: #555;
    white-space: nowrap;
    margin-right: 4px;
}

.num-dec i {
    color: #1e7cc8;
}

.tables-body {
    padding-left: 7px;
    display: grid;
    grid-template-columns: 68px 68px;
}

.cells-body {
    padding-left: 6px;
    display: grid;
    grid-template-columns: 42px 42px 42px;
}

.editing-body {
    padding-left: 8px;
    display: grid;
    grid-template-columns: 87px 44px 44px;
}

.edit-col {
    padding-top: 6px;
}

.autosum-row {
    gap: 6px;
}

.clear-row {
    margin-top: 6px;
    gap: 4px;
}

.edit-col .chev {
    margin-left: 2px;
}

.ideas-body {
    display: flex;
    justify-content: center;
}

/* formula bar */
.formula-bar {
    height: 38px;
    display: flex;
    gap: 5px;
    padding: 6px 5px 9px 4px;
    background: #f3f2f1;
}

.name-box {
    width: 121px;
    display: flex;
    align-items: center;
    justify-content: space-between;
    padding: 0 4px 0 3px;
    background: #fff;
    font-size: 13px;
    color: #444;
}

.fx-box {
    width: 30px;
    background: #fff;
    text-align: center;
    font-family: "Liberation Serif", serif;
    font-style: italic;
    font-size: 14px;
    line-height: 23px;
}

.formula-input {
    flex: 1;
    background: #fff;
    padding-left: 2px;
    font-size: 13.300px;
    line-height: 27px;
    color: #444;
}

/* column and row headers */
.col-heads {
    height: 19px;
    display: grid;
    grid-template-columns: 37px 154px 73px 145px 74px 74px 72px 19px repeat(50, 25px) 1fr;
    background: #ebebea;
    font-size: 12.300px;
    line-height: 17px;
    color: #666;
}

.col-heads span {
    text-align: center;
    border-right: 1px solid #d8d7d5;
    height: 17px;
    overflow: hidden;
}

.corner {
    width: 0;
    height: 0;
    margin-left: 18px;
    border-style: solid;
    border-width: 0 0 16px 16px;
    border-color: transparent transparent #b5b5b5 transparent;
}

.col-heads .col-active {
    height: 19px;
    background: #d6d5d3;
    border-bottom: 2px solid #217346;
    border-right: 0;
    color: #217346;
    font-weight: 700;
}

.sheet {
    height: 665px;
    display: flex;
}

.row-heads {
    width: 37px;
    flex: none;
    background: #ebebea;
    border-right: 2px solid #bdbdbd;
    font-size: 12.500px;
    color: #666;
    text-align: center;
}

.row-heads span {
    display: flex;
    align-items: flex-end;
    justify-content: center;
    line-height: 18px;
    border-bottom: 1px solid #dcdcdc;
}

.rh-40 {
    height: 40px;
}

.row-heads .rh-40:first-child {
    height: 39px;
}

.rh-20 {
    height: 20px;
}

.rh-33 {
    height: 33px;
}

.rh-41 {
    height: 41px;
}

.row-heads .row-active {
    background: #d6d5d3;
    color: #217346;
    font-weight: 700;
}

/* sheet body */
.grid {
    position: relative;
    width: 1866px;
    flex: none;
    display: flex;
    overflow: hidden;
    font-family: Lato, sans-serif;
}

.schedule {
    width: 611px;
    flex: none;
    font-size: 12.900px;
    color: #38424f;
}

.date {
    letter-spacing: -0.300px;
}

.project {
    height: 212px;
    display: grid;
    grid-template-columns: 446px 73px 73px;
    grid-template-rows: 39px 40px 40px 40px;
    color: #111;
}

.project-title {
    grid-column: 1 / -1;
    padding-left: 2px;
    font-size: 24.500px;
    font-weight: 700;
    color: #595959;
    line-height: 43px;
}

.company {
    grid-column: 1 / -1;
    grid-row: 2;
    align-self: end;
    padding: 0 0 1px 2px;
    font-size: 16.500px;
    line-height: 20px;
}

.lead {
    grid-column: 1;
    grid-row: 3;
    padding: 3px 0 0 2px;
    font-size: 16.500px;
    line-height: 20px;
}

.field-label {
    grid-column: 1;
    text-align: right;
    padding-right: 12px;
    line-height: 41px;
}

.label-date {
    grid-row: 3;
}

.label-week {
    grid-row: 4;
}

.field-box {
    border: 1px solid #bdbdbd;
    text-align: center;
    line-height: 40px;
    color: #333;
}

.box-date {
    grid-column: 2 / span 2;
    grid-row: 3;
}

.box-week {
    grid-column: 2;
    grid-row: 4;
    margin-top: -1px;
}

.head-row {
    height: 41px;
    display: grid;
    grid-template-columns: 154px 73px 145px 74px 74px 72px 19px;
    background: #595959;
    border-bottom: 2px solid #d0d0d0;
    color: #fff;
    text-align: center;
    line-height: 43px;
    white-space: nowrap;
}

.head-selected {
    padding-right: 6px;
}

.task-row {
    width: 592px;
    height: 40px;
    display: grid;
    grid-template-columns: 154px 73px 145px 74px 74px 72px;
    border-bottom: 1px solid #fdd08a;
    border-right: 1px solid #fdd08a;
    text-align: center;
    line-height: 41px;
    white-space: nowrap;
}

.title-cell, .task-cell {
    text-align: left;
    line-height: 18px;
    align-self: end;
}

.title-cell {
    grid-column: 1 / -1;
    padding-left: 11px;
    font-weight: 700;
}

.task-cell {
    padding: 0 0 2px 20px;
}

.pct {
    position: relative;
}

.pct-bar {
    position: absolute;
    left: 1px;
    top: 2px;
    bottom: 2px;
    background: #bbb;
}

.pct em {
    position: relative;
}

/* timeline */
.timeline {
    position: relative;
    width: 1255px;
    flex: none;
    overflow: hidden;
}

.legend {
    height: 120px;
}

.legend-label {
    height: 39px;
    padding: 17px 0 0 2px;
    font-size: 16.500px;
    line-height: 22px;
    color: #111;
}

.legend-items {
    display: flex;
    gap: 24px;
}

.legend-items span {
    width: 101px;
    height: 41px;
    text-align: center;
    line-height: 41px;
    font-size: 16.300px;
    font-weight: 700;
    color: #fff;
}

.on-track {
    background: #1281b1;
}

.low-risk {
    background: #fdb237;
}

.med-risk {
    background: #8f4a7f;
}

.high-risk {
    background: #a92545;
}

.unassigned {
    background: #cfcfcf;
}

.legend-items .low-risk, .legend-items .unassigned {
    color: #111;
}

.months {
    height: 39px;
    display: flex;
    font-size: 18px;
    color: #111;
    line-height: 22px;
}

.months span {
    display: flex;
    align-items: flex-end;
    padding-bottom: 2px;
}

.feb {
    width: 675px;
    padding-left: 2px;
    background: #fdeed9;
}

.mar {
    flex: 1;
    padding-left: 28px;
    background: #fddfad;
}

.tl-head {
    height: 94px;
    color: #fff;
    background: repeating-linear-gradient(90deg, #a6a6a6 0 1px, transparent 1px 175px) #595959;
    border-bottom: 2px solid #d0d0d0;
    font-size: 13px;
}

.days {
    height: 26px;
    display: flex;
    line-height: 22px;
}

.days span, .dows span {
    flex: 0 0 25px;
    text-align: center;
}

.today {
    font-weight: 900;
}

.weeks {
    height: 27px;
    display: flex;
    line-height: 25px;
}

.weeks span {
    flex: 0 0 175px;
    padding-left: 2px;
    white-space: nowrap;
}

.dows {
    height: 39px;
    display: flex;
    line-height: 44px;
    background: repeating-linear-gradient(90deg, #a6a6a6 0 1px, transparent 1px 25px);
}

.gantt {
    background: repeating-linear-gradient(90deg, #fdd08a 0 1px, transparent 1px 25px);
}

.gantt-row {
    height: 40px;
    display: grid;
    grid-template-columns: repeat(50, 25px);
    grid-template-rows: 39px;
    border-bottom: 1px solid #fdd08a;
}

.bar {
    grid-row: 1;
    height: 40px;
}

.diamond {
    grid-row: 1;
    justify-self: center;
    align-self: center;
    width: 13px;
    height: 13px;
    margin-top: 20px;
    background: #d6603f;
    border: 1px solid #c04f30;
    border-radius: 2px;
    transform: rotate(45deg);
}

.flag {
    grid-row: 1;
    justify-self: center;
    margin-top: 22px;
    width: 14px;
    height: 15px;
    border-left: 2px solid #777;
    position: relative;
}

.flag::after {
    content: "";
    position: absolute;
    left: 1px;
    top: 0;
    border-style: solid;
    border-width: 6px 0 6px 11px;
    border-color: transparent transparent transparent #e3b468;
}

.today-line {
    position: absolute;
    top: 159px;
    bottom: 0;
    width: 1px;
    background: #ae1f33;
}

.today-line-a {
    left: 100px;
}

.today-line-b {
    left: 125px;
}

/* selected cell + tooltip, both sit over the sheet */
.cell-cursor {
    position: absolute;
    left: -1px;
    top: 212px;
    width: 155px;
    height: 43px;
    border: 2px solid #217346;
    outline: 1px solid #fff;
    outline-offset: -3px;
}

.cell-cursor i {
    position: absolute;
    right: -4px;
    bottom: -4px;
    width: 6px;
    height: 6px;
    background: #217346;
    border: 1px solid #fff;
}

.cell-tip {
    position: absolute;
    left: 77px;
    top: 259px;
    width: 232px;
    height: 90px;
    padding: 1px 2px;
    background: #fff;
    border: 1px solid #a6a6a6;
    font-size: 11px;
    line-height: 14.500px;
    color: #555;
    white-space: nowrap;
}

/* scrollbars */
.vscroll {
    width: 17px;
    flex: none;
    display: flex;
    flex-direction: column;
    align-items: center;
    background: #e6e6e6;
    padding-top: 16px;
}

.vthumb {
    width: 17px;
    height: 118px;
    margin-top: 8px;
    background: #fff;
    border: 1px solid #bdbdbd;
}

.arrow-down {
    margin-top: 486px;
}

.hscroll {
    height: 17px;
    display: flex;
    background: #e6e6e6;
}

.hs-corner {
    width: 37px;
    background: #ebebea;
}

.hs-left {
    width: 33px;
    padding-left: 17px;
    display: flex;
    align-items: center;
}

.hthumb {
    width: 874px;
    background: #fff;
    border: 1px solid #bdbdbd;
}

.hs-right {
    flex: 1;
    display: flex;
    align-items: center;
    justify-content: flex-end;
    padding-right: 35px;
}

/* sheet tabs + status */
.sheet-tabs {
    height: 28px;
    display: flex;
    align-items: flex-start;
    background: #f3f2f1;
    border-bottom: 1px solid #dcdcdc;
}

.tab-nav {
    width: 82px;
    padding: 9px 0 0 11px;
    display: flex;
    gap: 22px;
}

.sheet-tab {
    height: 22px;
    margin-top: 2px;
    text-align: center;
    font-family: Lato, sans-serif;
    font-size: 13px;
    line-height: 18px;
    white-space: nowrap;
}

.tab-gantt {
    width: 76px;
    margin-right: 3px;
    background: linear-gradient(#fff, #bfe3f5);
    border-bottom: 2px solid #217346;
    color: #217346;
    font-weight: 700;
}

.tab-about {
    width: 75px;
    background: #fddfad;
    color: #555;
}

.tab-sep {
    width: 1px;
    height: 25px;
    margin: 2px 0 0 2px;
    background: #aaa;
}

.add-sheet {
    margin: 4px 0 0 40px;
}

.status-bar {
    height: 22px;
    display: flex;
    align-items: center;
    justify-content: flex-end;
    gap: 44px;
    padding: 0 10px 2px 0;
    font-size: 11.700px;
    color: #555;
}
```
